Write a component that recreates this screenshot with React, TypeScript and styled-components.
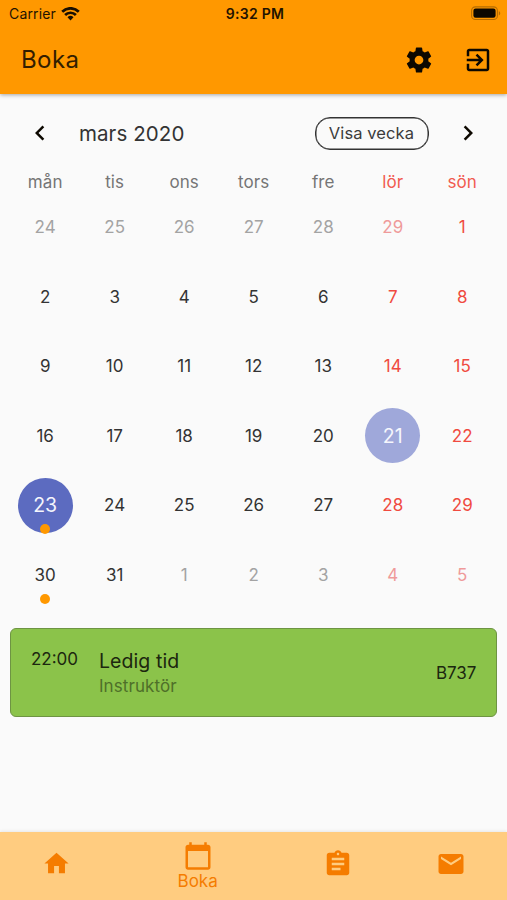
import * as React from "react";
import styled, { createGlobalStyle } from "styled-components";
import {
  MdAssignment,
  MdCalendarToday,
  MdChevronLeft,
  MdChevronRight,
  MdEmail,
  MdHome
} from "react-icons/md";

const GlobalStyle = createGlobalStyle`
  * {
    box-sizing: border-box;
  }

  body {
    margin: 0;
    background-color: #fafafa;
    font-family: Inter, "Liberation Sans", sans-serif;
  }
`;

const Screen = styled.div`
  display: flex;
  flex-direction: column;
  width: 507px;
  height: 900px;
  overflow: hidden;
  background-color: #fafafa;
`;

const Header = styled.header`
  flex: none;
  height: 94px;
  background-color: #ff9800;
  box-shadow: 0 1px 4px rgba(0, 0, 0, 0.35);
`;

const StatusBar = styled.div`
  display: grid;
  grid-template-columns: 1fr auto 1fr;
  align-items: center;
  height: 26px;
  padding: 1px 6px 0 9px;
  color: #1f1300;
`;

const Carrier = styled.div`
  display: flex;
  align-items: center;
  gap: 5px;
  font-size: 14px;
  letter-spacing: 0.15px;
`;

const Clock = styled.div`
  font-size: 14px;
  font-weight: 600;
  letter-spacing: 0.3px;
`;

const BatteryIcon = styled.svg`
  justify-self: end;
`;

const Toolbar = styled.div`
  display: flex;
  align-items: center;
  height: 67px;
  padding: 0 14px 0 21px;
`;

const Title = styled.h1`
  flex: 1;
  margin: 0;
  font-size: 24px;
  font-weight: 400;
  letter-spacing: 0.4px;
  color: #331e00;
`;

const IconButton = styled.button`
  display: flex;
  align-items: center;
  justify-content: center;
  width: 30px;
  height: 30px;
  padding: 0;
  border: none;
  background: none;
  color: #0d0800;

  & + & {
    margin-left: 29px;
  }
`;

const Calendar = styled.main`
  flex: 1;
  padding: 16px 10px 0 10.4px;
`;

const MonthBar = styled.div`
  display: flex;
  align-items: center;
  height: 46px;
  padding: 0 14.5px;
`;

const MonthTitle = styled.h2`
  flex: 1;
  margin: 0;
  padding-left: 24px;
  font-size: 20.5px;
  font-weight: 400;
  letter-spacing: 0.1px;
  color: #333333;
`;

const FormatButton = styled.button`
  width: 114px;
  height: 33px;
  margin-right: 24px;
  padding: 0;
  border: 1px solid #333333;
  border-radius: 15px;
  box-shadow: inset 0 0 0 0.5px #333333;
  background: none;
  font-family: inherit;
  font-size: 16.5px;
  letter-spacing: 0.1px;
  color: #3c3c3c;
`;

const Week = styled.div`
  display: grid;
  grid-template-columns: repeat(7, 1fr);
`;

const Weekday = styled.div<{ $weekend: boolean }>`
  height: 36.5px;
  padding-top: 8px;
  font-size: 17px;
  line-height: 36px;
  letter-spacing: 0.1px;
  text-align: center;
  color: ${props => (props.$weekend ? "#f15b50" : "#757575")};
`;

type Highlight = "selected" | "today";

interface DayCellProps {
  $weekend: boolean;
  $outside: boolean;
}

const dayColor = ({ $weekend, $outside }: DayCellProps) => {
  if ($weekend) {
    return $outside ? "#ef9a9a" : "#f04a40";
  }
  return $outside ? "#a3a3a3" : "#333333";
};

const DayCell = styled.div<DayCellProps>`
  position: relative;
  display: flex;
  align-items: center;
  justify-content: center;
  height: 69.5px;
  font-size: 17px;
  color: ${dayColor};
`;

const DayCircle = styled.span<{ $highlight: Highlight }>`
  display: flex;
  align-items: center;
  justify-content: center;
  width: 55px;
  height: 55px;
  border-radius: 50%;
  background-color: ${props =>
    props.$highlight === "selected" ? "#5c6bc0" : "#9fa8da"};
  font-size: 19.5px;
  color: #f5f6fc;
`;

const EventDot = styled.span`
  position: absolute;
  bottom: 6px;
  left: calc(50% - 5px);
  width: 10px;
  height: 10px;
  border-radius: 50%;
  background-color: #ff9800;
`;

const BookingCard = styled.div`
  display: flex;
  height: 89px;
  margin-top: 18.5px;
  padding: 0 19.5px;
  border: 1px solid #6e9443;
  border-radius: 6px;
  background-color: #8bc34a;
`;

const BookingTime = styled.div`
  width: 68px;
  padding-top: 19px;
  font-size: 17px;
  line-height: 22px;
  color: #1c270f;
`;

const BookingInfo = styled.div`
  flex: 1;
  padding-top: 19px;
`;

const BookingTitle = styled.div`
  font-size: 19.5px;
  line-height: 26px;
  letter-spacing: 0.1px;
  color: #1c270f;
`;

const BookingRole = styled.div`
  font-size: 17px;
  line-height: 24px;
  letter-spacing: 0.1px;
  color: #4f7029;
`;

const Aircraft = styled.div`
  align-self: center;
  font-size: 17px;
  color: #1c270f;
`;

const NavBar = styled.nav`
  display: grid;
  grid-template-columns: 2fr 3fr 2fr 2fr;
  flex: none;
  height: 68.5px;
  background-color: #ffcc80;
  box-shadow: 0 -1px 3px rgba(0, 0, 0, 0.08);
`;

const NavItem = styled.div<{ $active?: boolean }>`
  display: flex;
  flex-direction: column;
  align-items: center;
  padding-top: ${props => (props.$active ? 9 : 17)}px;
  padding-left: 1px;
  font-size: 17px;
  line-height: 20px;
  color: #f57c00;
`;

const WEEKDAYS = ["mån", "tis", "ons", "tors", "fre", "lör", "sön"];

const WEEKS = [
  [24, 25, 26, 27, 28, 29, 1],
  [2, 3, 4, 5, 6, 7, 8],
  [9, 10, 11, 12, 13, 14, 15],
  [16, 17, 18, 19, 20, 21, 22],
  [23, 24, 25, 26, 27, 28, 29],
  [30, 31, 1, 2, 3, 4, 5]
];

const isOutside = (week: number, day: number) =>
  (week === 0 && day > 7) || (week === 5 && day < 7);

const HIGHLIGHTS: { [key: string]: Highlight } = {
  "3-21": "today",
  "4-23": "selected"
};

const EVENTS = ["4-23", "5-30"];

const Wifi = () => (
  <svg width="19" height="14" viewBox="0 0 19 14" fill="none">
    <g stroke="#1a0f00" strokeWidth="2.7">
      <path d="M1.2 4.7a11.8 11.8 0 0 1 16.6 0" />
      <path d="M4.1 8a7.6 7.6 0 0 1 10.8 0" />
    </g>
    <path d="M6.5 10.3a4.3 4.3 0 0 1 6 0L9.5 13.4z" fill="#1a0f00" />
  </svg>
);

const Battery = () => (
  <BatteryIcon width="30" height="15" viewBox="0 0 30 15">
    <rect
      x="0.6"
      y="0.9"
      width="25.8"
      height="12.6"
      rx="3.8"
      fill="none"
      stroke="#b56c00"
      strokeWidth="1.1"
    />
    <rect x="2.4" y="2.6" width="22.2" height="9.2" rx="2.2" fill="#0d0800" />
    <path d="M27.8 5.2c1.9.6 1.9 3.6 0 4.2z" fill="#b56c00" />
  </BatteryIcon>
);

const SettingsIcon = () => (
  <svg width="30" height="30" viewBox="0 0 24 24" fill="currentColor">
    <path d="M19.43 12.98c.04-.32.07-.64.07-.98s-.03-.66-.07-.98l2.11-1.65c.19-.15.24-.42.12-.64l-2-3.46c-.12-.22-.39-.3-.61-.22l-2.49 1c-.52-.4-1.08-.73-1.69-.98l-.38-2.65C14.46 2.18 14.25 2 14 2h-4c-.25 0-.46.18-.49.42l-.38 2.65c-.61.25-1.17.59-1.69.98l-2.49-1c-.23-.09-.49 0-.61.22l-2 3.46c-.13.22-.07.49.12.64l2.11 1.65c-.04.32-.07.65-.07.98s.03.66.07.98l-2.11 1.65c-.19.15-.24.42-.12.64l2 3.46c.12.22.39.3.61.22l2.49-1c.52.4 1.08.73 1.69.98l.38 2.65c.03.24.24.42.49.42h4c.25 0 .46-.18.49-.42l.38-2.65c.61-.25 1.17-.59 1.69-.98l2.49 1c.23.09.49 0 .61-.22l2-3.46c.12-.22.07-.49-.12-.64l-2.11-1.65zM12 15.5c-1.93 0-3.5-1.57-3.5-3.5s1.57-3.5 3.5-3.5 3.5 1.57 3.5 3.5-1.57 3.5-3.5 3.5z" />
  </svg>
);

const ExitIcon = () => (
  <svg width="30" height="30" viewBox="0 0 24 24" fill="currentColor">
    <path d="M10.09 15.59L11.5 17l5-5-5-5-1.41 1.41L12.67 11H3v2h9.67l-2.58 2.59zM19 3H5c-1.11 0-2 .9-2 2v4h2V5h14v14H5v-4H3v4c0 1.1.89 2 2 2h14c1.1 0 2-.9 2-2V5c0-1.1-.9-2-2-2z" />
  </svg>
);

interface DayProps {
  week: number;
  day: number;
  weekend: boolean;
}

const Day: React.FC<DayProps> = ({ week, day, weekend }) => {
  const key = `${week}-${day}`;
  const highlight = HIGHLIGHTS[key];

  return (
    <DayCell $weekend={weekend} $outside={isOutside(week, day)}>
      {highlight ? <DayCircle $highlight={highlight}>{day}</DayCircle> : day}
      {EVENTS.includes(key) && <EventDot />}
    </DayCell>
  );
};

const App: React.FC = () => (
  <Screen>
    <GlobalStyle />
    <Header>
      <StatusBar>
        <Carrier>
          Carrier
          <Wifi />
        </Carrier>
        <Clock>9:32 PM</Clock>
        <Battery />
      </StatusBar>
      <Toolbar>
        <Title>Boka</Title>
        <IconButton>
          <SettingsIcon />
        </IconButton>
        <IconButton>
          <ExitIcon />
        </IconButton>
      </Toolbar>
    </Header>
    <Calendar>
      <MonthBar>
        <IconButton>
          <MdChevronLeft size={30} />
        </IconButton>
        <MonthTitle>mars 2020</MonthTitle>
        <FormatButton>Visa vecka</FormatButton>
        <IconButton>
          <MdChevronRight size={30} />
        </IconButton>
      </MonthBar>
      <Week>
        {WEEKDAYS.map((name, i) => (
          <Weekday key={name} $weekend={i > 4}>
            {name}
          </Weekday>
        ))}
      </Week>
      {WEEKS.map((days, week) => (
        <Week key={week}>
          {days.map((day, i) => (
            <Day key={day} week={week} day={day} weekend={i > 4} />
          ))}
        </Week>
      ))}
      <BookingCard>
        <BookingTime>22:00</BookingTime>
        <BookingInfo>
          <BookingTitle>Ledig tid</BookingTitle>
          <BookingRole>Instruktör</BookingRole>
        </BookingInfo>
        <Aircraft>B737</Aircraft>
      </BookingCard>
    </Calendar>
    <NavBar>
      <NavItem>
        <MdHome size={29} />
      </NavItem>
      <NavItem $active>
        <MdCalendarToday size={30} />
        Boka
      </NavItem>
      <NavItem>
        <MdAssignment size={30} />
      </NavItem>
      <NavItem>
        <MdEmail size={30} />
      </NavItem>
    </NavBar>
  </Screen>
);

export default App;
